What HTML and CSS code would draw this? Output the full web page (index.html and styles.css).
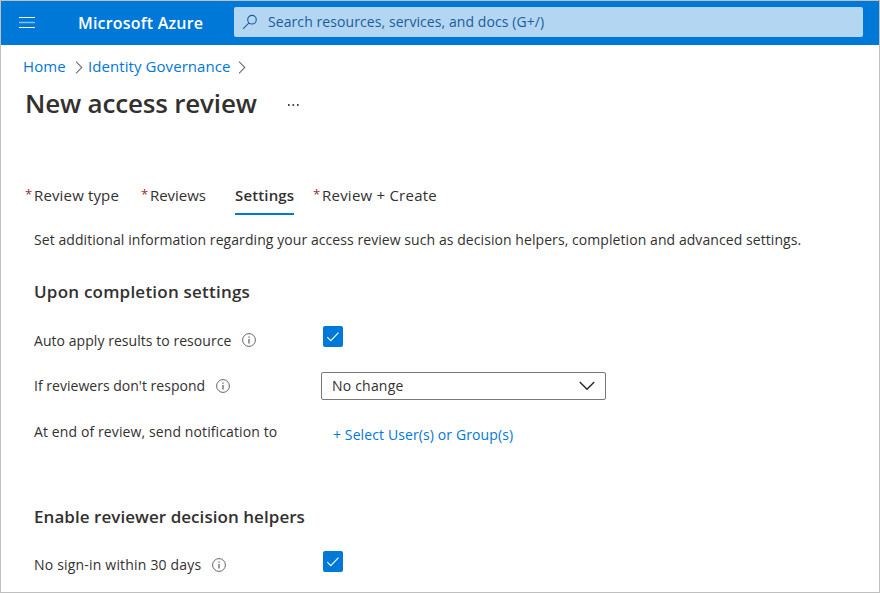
FILE: index.html
```html
<!DOCTYPE html>
<html lang="en">
<head>
<meta charset="utf-8">
<title>New access review - Microsoft Azure</title>
<link rel="stylesheet" href="styles.css">
</head>
<body>
<div class="window">
  <header class="topbar">
    <svg class="menu" width="16" height="11" viewBox="0 0 16 11"><path d="M0 .5h16M0 10.5h16" stroke="#fff"/><path d="M0 5.5h16" stroke="#8cc3ef" stroke-width="1.4"/></svg>
    <span class="brand">Microsoft Azure</span>
    <div class="search">
      <svg width="16" height="16" viewBox="0 0 16 16" fill="none" stroke="#1d5c98" stroke-width="1.1"><circle cx="10" cy="5.7" r="4.3"/><path d="M7 8.8 1 14.8"/></svg>
      <span class="search-text">Search resources, services, and docs (G+/)</span>
    </div>
  </header>
  <nav class="crumbs">
    <a class="crumb-home">Home</a>
    <svg width="8" height="13" viewBox="0 0 8 13" fill="none" stroke="#707070" stroke-width="1.1"><path d="M1 .7 6.8 6.5 1 12.3"/></svg>
    <a class="crumb-gov">Identity Governance</a>
    <svg width="8" height="13" viewBox="0 0 8 13" fill="none" stroke="#707070" stroke-width="1.1"><path d="M1 .7 6.8 6.5 1 12.3"/></svg>
  </nav>
  <div class="title-row">
    <h1>New access review</h1>
    <svg class="more" width="13" height="2" viewBox="0 0 13 2" fill="#444"><path d="M1 0h1.6v2H1zM5.5 0h1.6v2H5.5zM10 0h1.6v2H10z"/></svg>
  </div>
  <div class="tabs">
    <div class="tab tab-type"><i>*</i><span>Review type</span></div>
    <div class="tab tab-reviews"><i>*</i><span>Reviews</span></div>
    <div class="tab tab-active"><span>Settings</span></div>
    <div class="tab tab-create"><i>*</i><span>Review + Create</span></div>
  </div>
  <main>
    <p class="intro">Set additional information regarding your access review such as decision helpers, completion and advanced settings.</p>
    <h2 class="h-completion">Upon completion settings</h2>
    <div class="row">
      <div class="label l-auto"><span>Auto apply results to resource</span>
        <svg width="14" height="14" viewBox="0 0 14 14" fill="none" stroke="#666"><circle cx="7" cy="7" r="6.4"/><path d="M7 6v4.5M7 3.5v1.3" stroke-width="1.3"/></svg></div>
      <div class="check"><svg width="14" height="12" viewBox="0 0 14 12" fill="none" stroke="#fff" stroke-width="1.1"><path d="M1.3 6.2 4.8 9.7 12.5 1.7"/></svg></div>
    </div>
    <div class="row">
      <div class="label l-respond"><span>If reviewers don't respond</span>
        <svg width="14" height="14" viewBox="0 0 14 14" fill="none" stroke="#666"><circle cx="7" cy="7" r="6.4"/><path d="M7 6v4.5M7 3.5v1.3" stroke-width="1.3"/></svg></div>
      <div class="select"><span>No change</span>
        <svg width="16" height="10" viewBox="0 0 16 10" fill="none" stroke="#222" stroke-width="1.3"><path d="M.8 1 8 8.3 15.2 1"/></svg></div>
    </div>
    <div class="row">
      <div class="label l-end"><span>At end of review, send notification to</span></div>
      <a class="pick">+ Select User(s) or Group(s)</a>
    </div>
    <h2 class="h-helpers">Enable reviewer decision helpers</h2>
    <div class="row">
      <div class="label l-signin"><span>No sign-in within 30 days</span>
        <svg width="14" height="14" viewBox="0 0 14 14" fill="none" stroke="#666"><circle cx="7" cy="7" r="6.4"/><path d="M7 6v4.5M7 3.5v1.3" stroke-width="1.3"/></svg></div>
      <div class="check"><svg width="14" height="12" viewBox="0 0 14 12" fill="none" stroke="#fff" stroke-width="1.1"><path d="M1.3 6.2 4.8 9.7 12.5 1.7"/></svg></div>
    </div>
  </main>
</div>
</body>
</html>
```
FILE: styles.css
```css
* { box-sizing: border-box; }
body { margin: 0; background: #fff; color: #323130; font: 14px/24px "Open Sans", "Noto Sans", sans-serif; white-space: nowrap; overflow: hidden; }
svg { display: block; flex: none; }
h1, h2, p { margin: 0; }
.window { width: 880px; height: 593px; border: 1px solid #c0c0c0; }
.topbar { height: 44px; background: #0078d7; display: flex; align-items: center; }
.menu { margin: 0 0 1px 18px; }
.brand { margin-left: 43px; width: 156px; color: #fff; font-size: 16px; font-weight: 600; letter-spacing: .2px; }
.search { width: 629px; height: 30px; margin-bottom: 2px; background: #b3d6f2; border-radius: 2px; display: flex; align-items: center; padding-left: 8px; color: #1d5c98; }
.search-text { margin: 0 0 1px 10px; letter-spacing: .08px; }
.crumbs { display: flex; align-items: center; height: 24px; margin-top: 10px; padding-left: 22px; color: #0078d7; font-size: 15px; letter-spacing: .07px; }
.crumbs a { margin-bottom: 2px; }
.crumb-home { width: 52px; }
.crumb-gov { margin-left: 5px; width: 150px; }
.title-row { display: flex; align-items: center; height: 40px; margin-top: 4px; padding-left: 24px; }
h1 { width: 262px; font-size: 26px; font-weight: 600; line-height: 40px; letter-spacing: -.18px; }
.more { margin-top: 4px; }
.tabs { display: flex; height: 32px; margin-top: 60px; padding-left: 24px; font-size: 15px; line-height: 25px; letter-spacing: .15px; }
.tab { display: flex; }
.tab i { width: 9px; font-style: normal; font-size: 13px; color: #a4262c; line-height: 22px; }
.tab-type { width: 116px; }
.tab-reviews { width: 94px; letter-spacing: -.05px; }
.tab-active { width: 59px; border-bottom: 2px solid #0078d7; font-weight: 600; }
.tab-create { margin-left: 19px; letter-spacing: .23px; }
main { padding: 13px 0 0 33px; }
.intro { letter-spacing: .07px; }
h2 { font-size: 17px; font-weight: 600; line-height: 24px; }
.h-completion { margin: 28px 0 22px; letter-spacing: .22px; }
.h-helpers { margin: 41px 0 22px; letter-spacing: .05px; }
.row { display: grid; grid-template-columns: 287px 1fr; height: 46px; }
.label { display: flex; align-items: center; height: 28px; gap: 11px; letter-spacing: .05px; }
.l-auto span { padding-top: 2px; }
.l-respond { letter-spacing: .02px; }
.l-end { letter-spacing: .11px; }
.l-signin { height: 27px; letter-spacing: .19px; }
.check { width: 20px; height: 21px; margin: 0 0 0 2px; background: #0078d7; border-radius: 2px; display: flex; align-items: center; justify-content: center; }
.select { width: 285px; height: 28px; border: 1px solid #777; border-radius: 2px; display: flex; align-items: center; justify-content: space-between; padding: 0 10px; letter-spacing: .2px; }
.pick { margin: 5px 0 0 12px; color: #0078d7; letter-spacing: .11px; }
```
